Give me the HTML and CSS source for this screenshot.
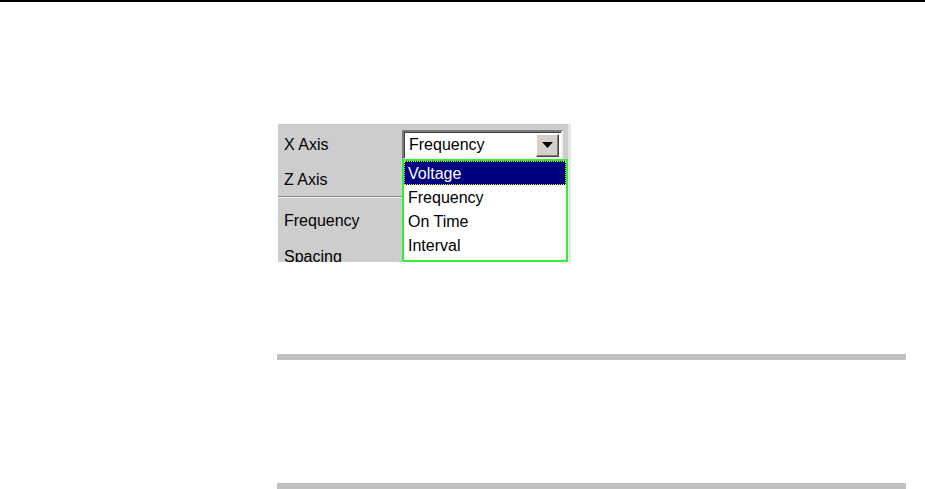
FILE: index.html
```html
<!DOCTYPE html>
<html>
  <head>
    <meta charset="UTF-8">
    <title>X Axis selection</title>
    <link rel="stylesheet" href="styles.css">
  </head>
  <body>
    <div class="top-rule"></div>
    <div class="page">
      <div class="panel">
        <div class="row row-x">
          <span class="label">X Axis</span>
          <div class="combo">
            <span class="combo-text">Frequency</span>
            <span class="combo-btn">
              <svg width="9" height="5" viewBox="0 0 9 5"><path d="M0 0H9L4.5 5Z" fill="#000"/></svg>
            </span>
          </div>
        </div>
        <div class="row row-z"><span class="label">Z Axis</span></div>
        <div class="sep"></div>
        <div class="row row-freq"><span class="label">Frequency</span></div>
        <div class="row row-spacing"><span class="label">Spacing</span></div>

        <ul class="droplist">
          <li class="selected">Voltage</li>
          <li>Frequency</li>
          <li>On Time</li>
          <li>Interval</li>
        </ul>
      </div>

      <div class="note">
        <div class="bar"></div>
        <div class="note-body"></div>
        <div class="bar"></div>
      </div>
    </div>
  </body>
</html>
```

FILE: styles.css
```css
body {
  margin: 0;
  background: #fff;
  font-family: "Liberation Sans", Arial, sans-serif;
  font-size: 16px;
  color: #000;
}
.top-rule {
  height: 2px;
  background: #000;
}
.page {
  display: flex;
  flex-direction: column;
  padding-left: 277px;
}
.panel {
  position: relative;
  box-sizing: border-box;
  margin-top: 122px;
  margin-left: 1px;
  padding-top: 2px;
  width: 293px;
  height: 138px;
  overflow: hidden;
  background: #cdcdcd;
  border-right: 3px solid #e6e6e6;
}
.row {
  display: flex;
  align-items: center;
}
.row-x {
  height: 38px;
}
.row-z {
  height: 32px;
}
.row-freq {
  height: 45px;
}
.row-spacing {
  height: 26px;
  padding-top: 1px;
}
.label {
  width: 118px;
  padding-left: 6px;
}
.sep {
  width: 124px;
  height: 1px;
  background: #888;
  border-bottom: 1px solid #f2f2f2;
}
.combo {
  display: flex;
  align-items: center;
  justify-content: space-between;
  box-sizing: border-box;
  width: 161px;
  height: 30px;
  background: #fff;
  border-top: 2px solid #7a7a7a;
  border-left: 2px solid #7a7a7a;
  border-bottom: 2px solid #f0f0f0;
  border-right: 2px solid #f0f0f0;
  box-shadow: inset 1px 1px 0 #404040;
}
.combo-text {
  padding-left: 5px;
}
.combo-btn {
  display: flex;
  align-items: center;
  justify-content: center;
  width: 21px;
  height: 21px;
  margin-right: 2px;
  background: #d4d0c8;
  border-top: 1px solid #fff;
  border-left: 1px solid #fff;
  border-right: 1px solid #404040;
  border-bottom: 1px solid #404040;
  box-shadow: inset -1px -1px 0 #808080;
}
.combo-btn svg {
  width: 11px;
  height: 6px;
}
.droplist {
  position: absolute;
  left: 124px;
  top: 35px;
  box-sizing: border-box;
  width: 166px;
  height: 103px;
  margin: 0;
  padding: 0;
  list-style: none;
  background: #fff;
  border: 2px solid #33ee33;
}
.droplist li {
  height: 24px;
  line-height: 25px;
  padding-left: 4px;
}
.droplist li.selected {
  height: 22px;
  line-height: 23px;
  padding-left: 3px;
  background: #000080;
  color: #fff;
  outline: 1px dotted #e8e840;
  outline-offset: -1px;
  border: 1px solid #000080;
}
.note {
  display: flex;
  flex-direction: column;
  margin-top: 92px;
  width: 629px;
}
.bar {
  height: 6px;
  background: #c0c0c0;
}
.note-body {
  height: 123px;
}
```
